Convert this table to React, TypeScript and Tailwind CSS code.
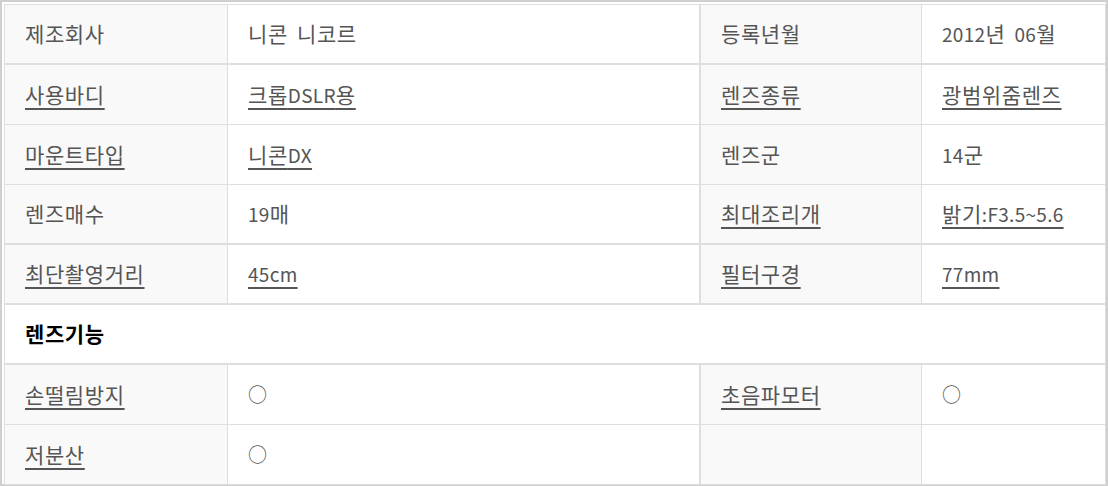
import React from 'react';

type Cell = { text: string; link?: boolean };
type Row = [Cell, Cell, Cell, Cell];

const specs: Row[] = [
    [{ text: '제조회사' }, { text: '니콘 니코르' }, { text: '등록년월' }, { text: '2012년 06월' }],
    [{ text: '사용바디', link: true }, { text: '크롭DSLR용', link: true }, { text: '렌즈종류', link: true }, { text: '광범위줌렌즈', link: true }],
    [{ text: '마운트타입', link: true }, { text: '니콘DX', link: true }, { text: '렌즈군' }, { text: '14군' }],
    [{ text: '렌즈매수' }, { text: '19매' }, { text: '최대조리개', link: true }, { text: '밝기:F3.5~5.6', link: true }],
    [{ text: '최단촬영거리', link: true }, { text: '45cm', link: true }, { text: '필터구경', link: true }, { text: '77mm', link: true }],
];

// rows whose bottom rule is drawn heavier
const thickSpecRows = [0, 3, 4];

const features: Row[] = [
    [{ text: '손떨림방지', link: true }, { text: '○' }, { text: '초음파모터', link: true }, { text: '○' }],
    [{ text: '저분산', link: true }, { text: '○' }, { text: '' }, { text: '' }],
];

// hangul runs are set a bit larger so they take the width of the original face
const Mixed: React.FC<{ text: string }> = ({ text }) => (
    <>
        {text.split(/([\uAC00-\uD7A3]+)/).map((part, i) =>
            /[\uAC00-\uD7A3]/.test(part) ? (
                <span key={i} className="text-[21px] tracking-[0.6px]">{part}</span>
            ) : (
                <span key={i} className="tracking-[0.3px]">{part.replace(/ /g, '\u00a0 ')}</span>
            )
        )}
    </>
);

const CellText: React.FC<{ cell: Cell }> = ({ cell }) =>
    cell.link ? (
        <span className="underline underline-offset-[5px] decoration-2 decoration-[#555]">
            <Mixed text={cell.text} />
        </span>
    ) : (
        <span>
            <Mixed text={cell.text} />
        </span>
    );

const SpecRow: React.FC<{ row: Row; thick?: boolean }> = ({ row, thick }) => (
    <>
        {row.map((cell, i) => (
            <div
                key={i}
                className={`h-[60px] flex items-center pl-[20px] border-[#dedede] ${thick ? 'border-b-2' : 'border-b'} ${
                    i === 1 ? 'border-r-2' : 'border-r'
                } ${i % 2 === 0 ? 'bg-[#f9f9f9]' : 'bg-white'}`}
            >
                <CellText cell={cell} />
            </div>
        ))}
    </>
);

const App: React.FC = () => {
    return (
        <div
            className="w-[1108px] h-[486px] border-2 border-[#cfcfcf] pl-[2px] pt-[2px] bg-white text-[19px] text-[#555]"
            style={{ fontFamily: '"Noto Sans CJK KR", "Noto Sans", sans-serif' }}
        >
            <div className="grid grid-cols-[223px_473px_221px_1fr] border-t border-l border-[#dedede]">
                {specs.map((row, i) => (
                    <SpecRow key={i} row={row} thick={thickSpecRows.includes(i)} />
                ))}

                {/* 렌즈기능 */}
                <div className="col-span-4 h-[60px] flex items-center pl-[20px] border-b-2 border-r border-[#dedede] bg-white font-bold text-black">
                    <Mixed text="렌즈기능" />
                </div>

                {features.map((row, i) => (
                    <SpecRow key={i} row={row} />
                ))}
            </div>
        </div>
    );
};

export default App;
